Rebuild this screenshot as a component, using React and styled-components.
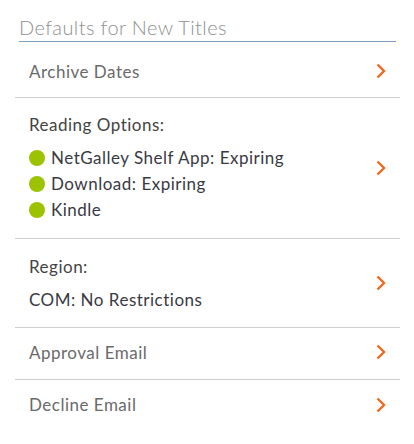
import styled, { createGlobalStyle } from "styled-components";

const GlobalStyle = createGlobalStyle`
  body {
    margin: 0;
    background: #fff;
    font-family: "Lato", "Open Sans", sans-serif;
  }
`;

const Panel = styled.div`
  width: 385px;
  margin: 0 0 0 15px;
  padding-top: 15px;
`;

const Heading = styled.h2`
  margin: 0 4px;
  padding-bottom: 2px;
  font-size: 20px;
  font-weight: 300;
  line-height: 24px;
  letter-spacing: 0.4px;
  color: #8f8f8f;
  border-bottom: 1px solid #7f9fbd;
`;

const List = styled.ul`
  list-style: none;
  margin: 0;
  padding: 0;
`;

const Row = styled.li`
  display: flex;
  align-items: center;
  justify-content: space-between;
  min-height: ${(p) => p.$height}px;
  padding: ${(p) => p.$shift || 0}px 13px ${(p) => p.$lift || 0}px 14px;
  box-sizing: border-box;
  border-bottom: ${(p) => (p.$last ? "none" : "1px solid #cfcfcf")};
  cursor: pointer;
`;

const Title = styled.span`
  font-size: 17px;
  color: #6a6a6a;
  letter-spacing: 0.5px;
`;

const Details = styled.div`
  display: flex;
  flex-direction: column;
`;

const Label = styled.div`
  font-size: 17px;
  color: #444;
  letter-spacing: 0.5px;
  margin-bottom: ${(p) => p.$gap}px;
`;

const Option = styled.div`
  display: flex;
  align-items: center;
  gap: 6px;
  font-size: 17px;
  line-height: 26px;
  color: #3a3a44;
  letter-spacing: 0.5px;
`;

const Dot = styled.span`
  width: 16px;
  height: 16px;
  border-radius: 50%;
  background: #9dc200;
  flex: none;
`;

const Value = styled.div`
  font-size: 17px;
  color: #3a3a44;
  letter-spacing: 0.5px;
`;

const Chevron = () => (
  <svg width="12" height="16" viewBox="0 0 12 16" fill="none">
    <path
      d="M2.5 1.5 L9 8 L2.5 14.5"
      stroke="#f5661f"
      strokeWidth="2.4"
      strokeLinecap="butt"
    />
  </svg>
);

export default function App() {
  return (
    <>
      <GlobalStyle />
      <Panel>
        <Heading>Defaults for New Titles</Heading>
        <List>
          <Row $height={56} $shift={3}>
            <Title>Archive Dates</Title>
            <Chevron />
          </Row>
          <Row $height={141}>
            <Details>
              <Label $gap={10}>Reading Options:</Label>
              <Option>
                <Dot />
                NetGalley Shelf App: Expiring
              </Option>
              <Option>
                <Dot />
                Download: Expiring
              </Option>
              <Option>
                <Dot />
                Kindle
              </Option>
            </Details>
            <Chevron />
          </Row>
          <Row $height={89}>
            <Details>
              <Label $gap={12}>Region:</Label>
              <Value>COM: No Restrictions</Value>
            </Details>
            <Chevron />
          </Row>
          <Row $height={52} $lift={3}>
            <Title>Approval Email</Title>
            <Chevron />
          </Row>
          <Row $height={52} $lift={3} $last>
            <Title>Decline Email</Title>
            <Chevron />
          </Row>
        </List>
      </Panel>
    </>
  );
}
